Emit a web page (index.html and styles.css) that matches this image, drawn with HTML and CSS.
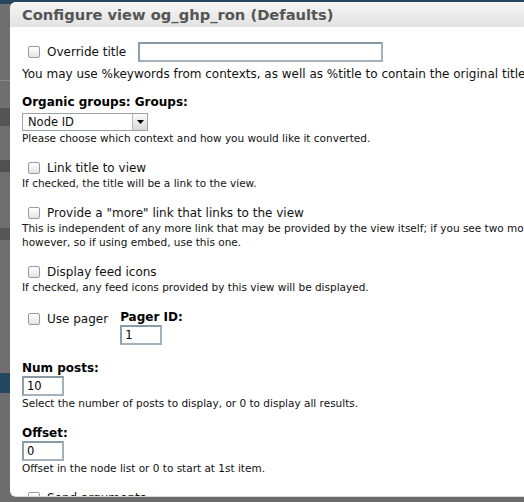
FILE: index.html
```html
<!DOCTYPE html>
<html lang="en">
<head>
    <meta charset="UTF-8">
    <meta name="viewport" content="width=device-width, initial-scale=1.0">
    <title>Configure view</title>
    <link rel="stylesheet" href="styles.css">
</head>
<body>
    <!-- the admin page behind the overlay -->
    <div class="backdrop">
        <div class="band band-top"></div>
        <div class="band band-gap1"></div>
        <div class="band band-line"></div>
        <div class="band band-gap2"></div>
        <div class="band band-dark"></div>
        <div class="band band-gap3"></div>
        <div class="band band-dark2"></div>
        <div class="band band-gap4"></div>
        <div class="band band-dark3"></div>
        <div class="band band-gap5"></div>
        <div class="band band-navy"></div>
    </div>

    <div class="modal">
        <div class="modal-title">Configure view og_ghp_ron (Defaults)</div>

        <div class="modal-body">
            <div class="form-item inline-row">
                <label class="check"><input type="checkbox"> Override title</label>
                <input type="text" class="text-field title-field">
            </div>
            <div class="description large">You may use %keywords from contexts, as well as %title to contain the original title.</div>

            <div class="form-item">
                <label class="field-label">Organic groups: Groups:</label>
                <div class="select">
                    <span class="select-value">Node ID</span>
                    <span class="select-arrow">
                        <svg width="7" height="4" viewBox="0 0 7 4"><path d="M0 0h7L3.5 4z" fill="#000"/></svg>
                    </span>
                </div>
                <div class="description">Please choose which context and how you would like it converted.</div>
            </div>

            <div class="form-item">
                <label class="check"><input type="checkbox"> Link title to view</label>
                <div class="description">If checked, the title will be a link to the view.</div>
            </div>

            <div class="form-item">
                <label class="check"><input type="checkbox"> Provide a "more" link that links to the view</label>
                <div class="description">This is independent of any more link that may be provided by the view itself; if you see two more links, turn this one off. Views will only provide a more link if using the "block" type,<br>however, so if using embed, use this one.</div>
            </div>

            <div class="form-item">
                <label class="check"><input type="checkbox"> Display feed icons</label>
                <div class="description">If checked, any feed icons provided by this view will be displayed.</div>
            </div>

            <div class="form-item pager-row">
                <label class="check"><input type="checkbox"> Use pager</label>
                <div class="pager-id">
                    <label class="field-label">Pager ID:</label>
                    <input type="text" class="text-field small-field" value="1">
                </div>
            </div>

            <div class="form-item">
                <label class="field-label">Num posts:</label>
                <input type="text" class="text-field small-field" value="10">
                <div class="description">Select the number of posts to display, or 0 to display all results.</div>
            </div>

            <div class="form-item">
                <label class="field-label">Offset:</label>
                <input type="text" class="text-field small-field" value="0">
                <div class="description">Offset in the node list or 0 to start at 1st item.</div>
            </div>

            <div class="form-item">
                <label class="check"><input type="checkbox"> Send arguments</label>
            </div>
        </div>
    </div>
</body>
</html>
```

FILE: styles.css
```css
body {
    margin: 0;
    padding: 0;
    font-family: "DejaVu Sans", Verdana, sans-serif;
    overflow: hidden;
    height: 502px;
    background: #6d6d6d;
}

/* page behind the dialog */
.backdrop {
    width: 100%;
}

.band {
    background: #6f6f6f;
}

.band-top {
    height: 4px;
    background: #274760;
}

.band-gap1 { height: 76px; }
.band-line { height: 1px; background: #8a8a8a; }
.band-gap2 { height: 27px; }
.band-dark { height: 18px; background: #555; }
.band-gap3 { height: 34px; }
.band-dark2 { height: 12px; background: #505050; }
.band-gap4 { height: 56px; }
.band-dark3 { height: 12px; background: #565656; }
.band-gap5 { height: 133px; }
.band-navy { height: 20px; background: #234760; }

/* dialog */
.modal {
    position: absolute;
    left: 10px;
    top: 2px;
    width: 640px;
    height: 494px;
    background: #fff;
    border-radius: 6px;
    overflow: hidden;
    box-shadow: 0 1px 0 #d8d8d8;
}

.modal-title {
    height: 25px;
    padding-left: 12px;
    line-height: 25px;
    font-size: 14.7px;
    font-weight: bold;
    color: #555;
    background: linear-gradient(#f6f6f6, #e2e2e2);
}

.modal-body {
    padding: 15px 12px 0;
    white-space: nowrap;
    color: #111;
}

.form-item {
    margin-bottom: 15px;
}

.inline-row {
    display: flex;
    align-items: center;
    gap: 12px;
    margin-bottom: 4px;
}

.check {
    display: flex;
    align-items: center;
    font-size: 12px;
    line-height: 16px;
}

.check input {
    appearance: none;
    width: 12px;
    height: 12px;
    margin: 0 7px 0 6px;
    border: 1px solid #9a9a9a;
    border-radius: 2px;
    background: linear-gradient(#fff, #e4e4e4);
}

.field-label {
    display: block;
    font-size: 12px;
    line-height: 16px;
    font-weight: bold;
    color: #000;
}

.description {
    font-size: 10.5px;
    line-height: 14px;
}

.description.large {
    font-size: 12px;
    line-height: 16px;
    margin-bottom: 12px;
}

.text-field {
    display: block;
    box-sizing: border-box;
    height: 20px;
    margin: 0;
    padding: 0 3px;
    border: 2px solid #a3b1bc;
    border-top-color: #8899a6;
    border-left-color: #8d9eab;
    font-family: "DejaVu Sans", Verdana, sans-serif;
    font-size: 11.5px;
    color: #000;
    background: #fff;
    outline: none;
}

.title-field {
    width: 245px;
}

.small-field {
    width: 42px;
}

/* fake mac-style popup menu */
.select {
    display: flex;
    box-sizing: border-box;
    width: 126px;
    height: 18px;
    margin-top: 3px;
    border: 1px solid #97a4ae;
    background: #fff;
    font-size: 11.5px;
}

.select-value {
    flex: 1;
    padding-left: 5px;
    line-height: 16px;
}

.select-arrow {
    display: flex;
    align-items: center;
    justify-content: center;
    width: 14px;
    border-left: 1px solid #b5b5b5;
    background: linear-gradient(#fafafa, #d9d9d9);
}

.pager-row {
    display: flex;
    align-items: flex-start;
    gap: 12px;
    margin-bottom: 15px;
}

.pager-row .check {
    margin-top: 2px;
}
```
